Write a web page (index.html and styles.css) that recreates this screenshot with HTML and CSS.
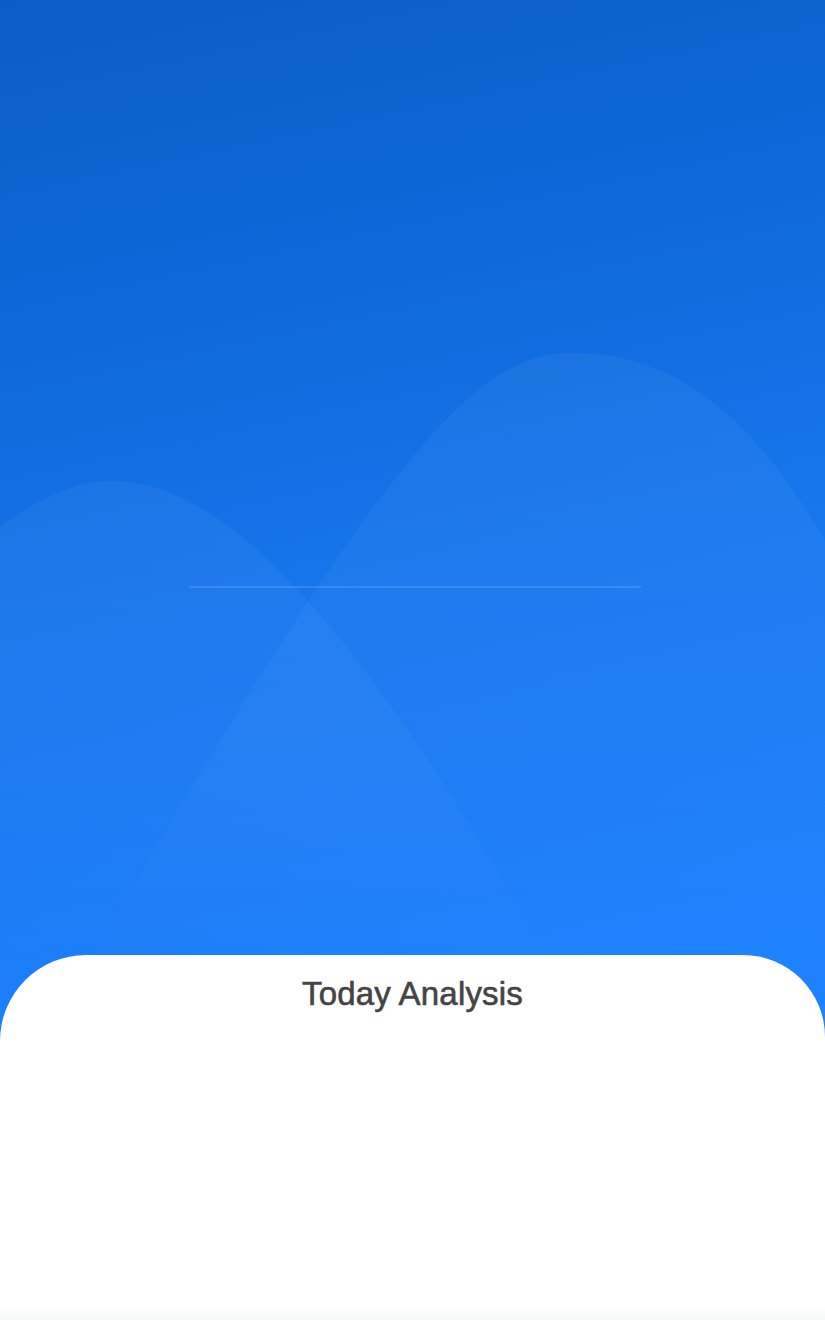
FILE: index.html
```html
<!DOCTYPE html>
<html lang="en">
<head>
<meta charset="utf-8">
<title>Today Analysis</title>
<link rel="stylesheet" href="styles.css">
</head>
<body>
<div class="page">
  <section class="hero">
    <svg class="waves" width="825" height="1040" viewBox="0 0 825 1040" aria-hidden="true">
      <defs>
        <linearGradient id="waveFade" x1="0" y1="0" x2="0" y2="1">
          <stop offset="0" stop-color="#ffffff" stop-opacity="0.045"/>
          <stop offset="0.6" stop-color="#ffffff" stop-opacity="0.025"/>
          <stop offset="1" stop-color="#ffffff" stop-opacity="0"/>
        </linearGradient>
      </defs>
      <path d="M -336 980 C -136 640, 0 481, 112 481 C 224 481, 360 620, 560 980 Z" fill="url(#waveFade)"/>
      <path d="M 60 1010 C 380 460, 470 353, 572 353 C 700 353, 800 450, 900 700 L 900 1010 Z" fill="url(#waveFade)"/>
    </svg>
    <div class="divider"></div>
  </section>
  <section class="card">
    <h1 class="card-title">Today Analysis</h1>
    <div class="card-body"></div>
    <div class="card-foot"></div>
  </section>
</div>
</body>
</html>
```

FILE: styles.css
```css
* { box-sizing: border-box; }

html, body {
  margin: 0;
  padding: 0;
}

body {
  font-family: "Liberation Sans", Arial, sans-serif;
  background: #ffffff;
}

.page {
  width: 825px;
  height: 1320px;
  overflow: hidden;
  display: flex;
  flex-direction: column;
  background-color: #1e80ff;
  background-image: linear-gradient(168deg, #0a5dc8 0%, #0f69d9 30%, #1776ec 55%, #1e81ff 92%);
  background-size: 100% 1040px;
  background-repeat: no-repeat;
}

.hero {
  position: relative;
  height: 955px;
  flex: 0 0 auto;
  padding-top: 586px;
}

.waves {
  position: absolute;
  left: 0;
  top: 0;
  pointer-events: none;
}

.divider {
  position: relative;
  margin-left: 189px;
  width: 452px;
  height: 2px;
  background: rgba(255, 255, 255, 0.13);
}

.card {
  flex: 1 1 auto;
  display: flex;
  flex-direction: column;
  background: #ffffff;
  border-radius: 86px 82px 0 0;
}

.card-title {
  margin: 0;
  padding-top: 19px;
  font-family: "Liberation Sans", Arial, sans-serif;
  font-size: 33px;
  line-height: 40px;
  font-weight: normal;
  color: #444444;
  text-align: center;
  letter-spacing: 0.2px;
  -webkit-text-stroke: 0.6px #444444;
}

.card-body {
  flex: 1 1 auto;
}

.card-foot {
  height: 14px;
  background: linear-gradient(180deg, #ffffff 0%, #f6f8f8 100%);
}
```
